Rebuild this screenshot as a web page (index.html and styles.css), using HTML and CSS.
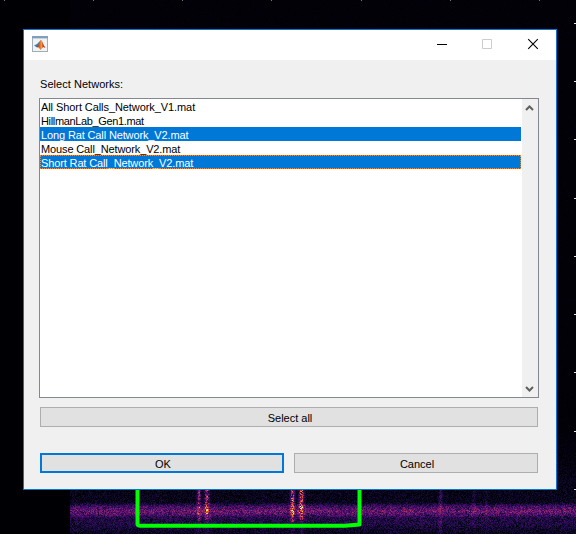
FILE: index.html
```html
<!DOCTYPE html>
<html lang="en">
<head>
<meta charset="utf-8">
<title>Select Networks</title>
<link rel="stylesheet" href="styles.css">
</head>
<body>
<canvas class="spectrogram" id="spectrogram" width="576" height="534"></canvas>
<svg class="axes" width="576" height="534" viewBox="0 0 576 534">
  <path stroke="#77777b" d="M4.500 0v1M93.500 0v1M182.500 0v1M271.500 0v1M361.500 0v1M450.500 0v1M539.500 0v1"/>
  <path stroke="#e6e6e6" d="M574 23.500h2M574 81.500h2M574 139.500h2M574 198.500h2M574 256.500h2M574 314.500h2M574 372.500h2M574 431.500h2M574 489.500h2"/>
  <path fill="none" stroke="#0f0" stroke-width="4" stroke-linejoin="round" d="M137.500 480V524Q137.500 525.500 140 525.800H345L359.500 524.500V480"/>
</svg>
<main class="dialog">
  <header class="titlebar">
    <svg class="app-icon" width="16" height="16" viewBox="0 0 16 16">
      <defs><linearGradient id="flame" x1="0" x2="1"><stop offset="0" stop-color="#7a2418"/><stop offset=".35" stop-color="#e8611c"/><stop offset=".55" stop-color="#f39a35"/><stop offset=".75" stop-color="#c63a1b"/><stop offset="1" stop-color="#a52c20"/></linearGradient></defs>
      <rect x=".5" y=".5" width="15" height="15" fill="#f0f3f6" stroke="#a3adb8"/>
      <path fill="#7fa0bd" d="M0 0h16v2H0z"/><path fill="#c5d3df" d="M1 2h14v1H1z"/>
      <path fill="#3f7fae" d="M2 9.500 5 8 7.500 5.500 8.700 4 7 10 5 11.500z"/>
      <path fill="url(#flame)" d="M4.500 11 6.200 9.500 8.600 4 9.700 4.200 11.700 9 13.500 12 11.200 11 8.500 14 6.800 11.500z"/>
    </svg>
    <div class="window-controls">
      <svg width="46" height="30" viewBox="0 0 46 30"><path stroke="#000" d="M18 14.500h10"/></svg>
      <svg width="46" height="30" viewBox="0 0 46 30"><path fill="none" stroke="#ccc" d="M17.500 9.500h9v9h-9z"/></svg>
      <svg width="46" height="30" viewBox="0 0 46 30"><path stroke="#000" stroke-width="1.100" d="m17.200 9.200 9.600 9.600M26.800 9.200l-9.600 9.600"/></svg>
    </div>
  </header>
  <section class="content">
    <p class="prompt">Select Networks:</p>
    <div class="listbox">
      <ul class="items">
        <li class="first">All Short Calls_Network_V1.mat</li>
        <li class="narrow">HillmanLab_Gen1.mat</li>
        <li class="selected">Long Rat Call Network_V2.mat</li>
        <li>Mouse Call_Network_V2.mat</li>
        <li class="selected focused">Short Rat Call_Network_V2.mat</li>
      </ul>
      <div class="scrollbar">
        <svg width="16" height="17" viewBox="0 0 16 17"><path fill="none" stroke="#606060" stroke-width="2" d="M4 11 7.500 7.500 11 11"/></svg>
        <svg width="16" height="17" viewBox="0 0 16 17"><path fill="none" stroke="#606060" stroke-width="2" d="M4 7 7.500 10.500 11 7"/></svg>
      </div>
    </div>
    <button class="button select-all">Select all</button>
    <div class="actions">
      <button class="button default">OK</button>
      <button class="button">Cancel</button>
    </div>
  </section>
</main>
<script src="spectrogram.js"></script>
</body>
</html>
```
FILE: styles.css
```css
* { box-sizing: border-box; }
body {
  margin: 0;
  width: 576px;
  height: 534px;
  overflow: hidden;
  padding: 29px 0 0 23px;
  background: #000004;
  color: #000;
  font: 11px/14px "Liberation Sans", Arial, sans-serif;
}
svg { display: block; }
.spectrogram, .axes { position: absolute; left: 0; top: 0; }
.dialog {
  position: relative;
  width: 534px;
  height: 461px;
  border: 1px solid #0078d7;
  background: #f0f0f0;
}
.titlebar {
  display: flex;
  justify-content: space-between;
  height: 30px;
  padding-left: 8px;
  background: #fff;
}
.app-icon { margin-top: 6px; }
.window-controls { display: flex; margin-right: -1px; }
.content { padding: 17px 17px 0 15px; }
.prompt { margin: 0 0 7px 1px; letter-spacing: .04px; }
.listbox {
  display: flex;
  height: 300px;
  border: 1px solid #828790;
  background: #fff;
}
.items { flex: 1; margin: 0 1px 0 0; padding: 0; list-style: none; }
.items li {
  height: 14px;
  padding-left: 1px;
  line-height: 16px;
  letter-spacing: -.13px;
  white-space: nowrap;
}
.items .first { letter-spacing: -.08px; }
.items .narrow { letter-spacing: -.35px; }
.items .selected { background: #0078d7; color: #fff; }
.items .focused { outline: 1px dotted #ff8728; outline-offset: -1px; }
.scrollbar {
  display: flex;
  flex-direction: column;
  justify-content: space-between;
  width: 16px;
  background: #f0f0f0;
}
.button {
  height: 20px;
  padding: 1px 0 0 2px;
  border: 1px solid #adadad;
  background: #e1e1e1;
  color: #000;
  font: inherit;
}
.select-all { display: block; width: 498px; margin: 9px 0 26px 1px; }
.actions { display: flex; gap: 10px; width: 498px; margin-left: 1px; }
.actions .button { width: 244px; }
.actions .default { border: 2px solid #0078d7; }
```
FILE: spectrogram.js
```js
const canvas = document.getElementById('spectrogram');
const ctx = canvas.getContext('2d');
const image = ctx.createImageData(576, 534);
const palette = [[0,0,4],[12,8,38],[36,12,79],[66,10,104],[93,18,110],[120,28,109],[147,38,103],[187,55,84],[221,81,58],[243,120,25],[252,165,10],[246,215,70],[252,255,164]];
let seed = 7321;
function random() {
  seed = (seed * 1664525 + 1013904223) >>> 0;
  return seed / 4294967296;
}
const gauss = (v, mid, width) => Math.exp(-((v - mid) ** 2) / (2 * width * width));
// x position, half width, strength, lower limit of each vertical call trace
const calls = [[198.5,1.3,.5,521],[206.5,1.7,.6,520],[292,1.4,.7,522],[301,1.8,.7,520],[440,1.2,.25,534],[473.5,1.1,.13,528],[485.500,1,.08,520]];
for (let y = 0; y < 534; y++) {
  for (let x = 0; x < 576; x++) {
    let value = 0;
    if (x >= 70) {
      const noise = random() + random() - 1;
      const ramp = Math.max(0, Math.min(1, (y - 430) / 65));
      const band = Math.exp(-(((y - 510) / 6.2) ** 4));
      const level = .01 + .042 * ramp + .22 * band + .09 * gauss(y, 521, 6) + .06 * gauss(y, 510.5, 1.5);
      value = level + noise * (.012 + .058 * ramp + level * .55 * ramp);
      if (y >= 485) {
        for (const [cx, width, strength, end] of calls) {
          const fade = y < end ? 1 : .3;
          value += gauss(x, cx, width) * strength * fade * (.1 + random() * 1.1) * (y > 513 ? .65 : 1);
        }
      }
    }
    value = Math.max(0, Math.min(.999, value));
    const position = value * 12;
    const index = Math.floor(position);
    const mix = position - index;
    const offset = (y * 576 + x) * 4;
    for (let c = 0; c < 3; c++) {
      image.data[offset + c] = palette[index][c] * (1 - mix) + palette[index + 1][c] * mix;
    }
    image.data[offset + 3] = 255;
  }
}
ctx.putImageData(image, 0, 0);
```
